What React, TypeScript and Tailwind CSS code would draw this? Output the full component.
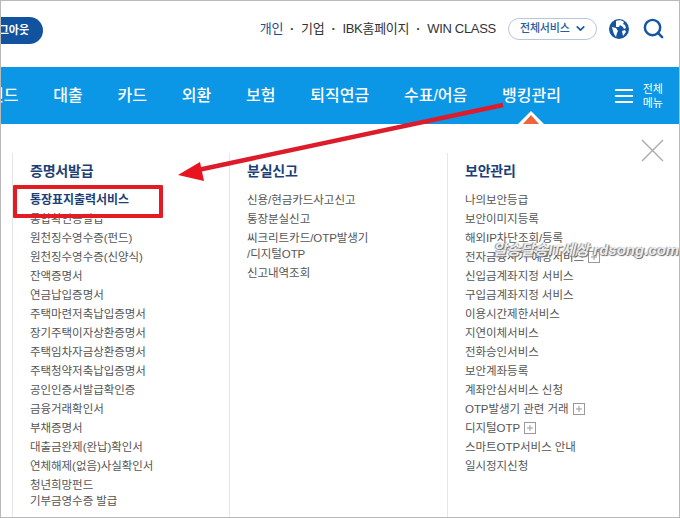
import { Search, ChevronDown } from 'lucide-react';

const FONT = "font-['Liberation_Sans','Noto_Sans_CJK_KR',sans-serif]";

const NAV = ['펀드', '대출', '카드', '외환', '보험', '퇴직연금', '수표/어음', '뱅킹관리'];

type Item = { label: string; sub?: string; plus?: boolean };

const COL1: Item[] = [
  { label: '통장표지출력서비스' },
  { label: '통합확인증발급' },
  { label: '원천징수영수증(펀드)' },
  { label: '원천징수영수증(신양식)' },
  { label: '잔액증명서' },
  { label: '연금납입증명서' },
  { label: '주택마련저축납입증명서' },
  { label: '장기주택이자상환증명서' },
  { label: '주택임차자금상환증명서' },
  { label: '주택청약저축납입증명서' },
  { label: '공인인증서발급확인증' },
  { label: '금융거래확인서' },
  { label: '부채증명서' },
  { label: '대출금완제(완납)확인서' },
  { label: '연체해제(없음)사실확인서' },
  { label: '청년희망펀드', sub: '기부금영수증 발급' },
];

const COL2: Item[] = [
  { label: '신용/현금카드사고신고' },
  { label: '통장분실신고' },
  { label: '씨크리트카드/OTP발생기', sub: '/디지털OTP' },
  { label: '신고내역조회' },
];

const COL3: Item[] = [
  { label: '나의보안등급' },
  { label: '보안이미지등록' },
  { label: '해외IP차단조회/등록' },
  { label: '전자금융사기 예방서비스', plus: true },
  { label: '신입금계좌지정 서비스' },
  { label: '구입금계좌지정 서비스' },
  { label: '이용시간제한서비스' },
  { label: '지연이체서비스' },
  { label: '전화승인서비스' },
  { label: '보안계좌등록' },
  { label: '계좌안심서비스 신청' },
  { label: 'OTP발생기 관련 거래', plus: true },
  { label: '디지털OTP', plus: true },
  { label: '스마트OTP서비스 안내' },
  { label: '일시정지신청' },
];

function PlusBox() {
  return (
    <svg width="12" height="12" viewBox="0 0 12 12" className="ml-[4px] shrink-0" fill="none" stroke="#999">
      <rect x="0.5" y="0.5" width="11" height="11" />
      <path d="M6 3v6M3 6h6" />
    </svg>
  );
}

function MenuColumn({ title, items, width, bold }: { title: string; items: Item[]; width: string; bold?: boolean }) {
  return (
    <div className={`${width} h-full shrink-0 border-l border-[#e6e6e6] pl-[17px] pt-[9px]`}>
      <h3 className="text-[14px] leading-[18px] font-bold text-[#1c3f77] tracking-[-0.2px]">{title}</h3>
      <ul className="mt-[10px]">
        {items.map((item, i) => (
          <li key={item.label} className="py-[1.5px] text-[11.5px] leading-[16px] text-[#555] tracking-[-0.05px]">
            <span className={`flex items-center ${bold && i === 0 ? 'text-[12px] font-bold text-[#1c3f77]' : ''}`}>
              {item.label}
              {item.plus && <PlusBox />}
            </span>
            {item.sub && <span className="block">{item.sub}</span>}
          </li>
        ))}
      </ul>
    </div>
  );
}

export default function App() {
  return (
    <div className={`relative h-[518px] w-[680px] overflow-hidden border border-[#b9b9b9] bg-white ${FONT}`}>
      {/* 상단 유틸 영역 */}
      <div className="flex h-[66px] items-start justify-between pt-[16px]">
        <div className="flex h-[27px] w-[42px] items-center justify-end overflow-hidden rounded-r-full bg-[#12539f] pr-[14px]">
          <span className="whitespace-nowrap text-[11px] font-bold text-white">로그아웃</span>
        </div>
        <div className="flex items-center pr-[14px]">
          <div className="flex items-center text-[13px] tracking-[-0.3px] text-[#333]">
            <span className="text-[#1a4d8f]">개인</span>
            <span className="mx-[7px] font-bold text-[#444]">·</span>
            <span>기업</span>
            <span className="mx-[7px] font-bold text-[#444]">·</span>
            <span>IBK홈페이지</span>
            <span className="mx-[7px] font-bold text-[#444]">·</span>
            <span>WIN CLASS</span>
          </div>
          <div className="ml-[12px] flex h-[22px] w-[89px] items-center justify-between rounded-full border border-[#b9c6d8] pl-[11px] pr-[9px] text-[11px] font-medium tracking-[-0.2px] text-[#2a5d9c]">
            전체서비스
            <ChevronDown size={13} strokeWidth={3} className="text-[#1f5597]" />
          </div>
          <svg width="20" height="20" viewBox="0 0 20 20" className="ml-[12px]">
            <circle cx="10" cy="10" r="10" fill="#15569f" />
            <path d="M7 2c3-1.200 6-.6 8 1l-1 2 2 1 1 3-2 1-1-2-3-2-1 2-3 0zM3 8l4 1 2 3-1 2-1 4-2-3-1-3z" fill="#fff" />
            <path d="M13 12l3-1 1 2-3 4z" fill="#fff" />
          </svg>
          <Search size={23} strokeWidth={2.6} className="ml-[13px] text-[#15569f]" />
        </div>
      </div>

      {/* 메인 내비게이션 */}
      <div className="relative flex h-[57px] items-center overflow-hidden bg-[#0b96e6] text-white">
        <div className="ml-[-12px] flex items-center gap-[34.8px] text-[16px] font-medium">
          {NAV.map((label) => (
            <span key={label} className="whitespace-nowrap">{label}</span>
          ))}
        </div>
        <div className="ml-auto flex items-center pr-[16px]">
          <div className="flex w-[18px] flex-col gap-[4px]">
            <span className="h-[2px] bg-white" />
            <span className="h-[2px] bg-white" />
            <span className="h-[2px] bg-white" />
          </div>
          <div className="ml-[10px] text-center text-[11px] leading-[14px]">
            전체
            <br />
            메뉴
          </div>
        </div>
        {/* 선택된 메뉴 표시 삼각형 */}
        <svg width="26" height="13" viewBox="0 0 26 13" className="absolute bottom-0 left-[517px]">
          <path d="M13 0L26 13H0z" fill="#fff" />
          <path d="M13 4l8 9H5z" fill="#f0643c" />
        </svg>
      </div>

      {/* 메뉴 패널 */}
      <div className="relative flex h-[393px] pl-[11px] pt-[29px] text-[#555]">
        <MenuColumn title="증명서발급" items={COL1} width="w-[217px]" bold />
        <MenuColumn title="분실신고" items={COL2} width="w-[218px]" />
        <MenuColumn title="보안관리" items={COL3} width="w-[220px]" />
        <svg width="23" height="23" viewBox="0 0 23 23" className="absolute right-[15px] top-[15px]" stroke="#aaa" strokeWidth="1.4">
          <path d="M1 1l21 21M22 1L1 22" />
        </svg>
      </div>

      {/* 캡처 위에 그린 표시: 빨간 박스 + 화살표 */}
      <div className="absolute left-[12px] top-[184px] h-[33px] w-[150px] rounded-[1px] border-[4px] border-[#e31b23]" />
      <svg width="680" height="518" viewBox="0 0 680 518" className="pointer-events-none absolute -left-px -top-px">
        <path d="M503 105L198 170" stroke="#dd1c2b" strokeWidth="4.500" />
        <path d="M178 175L200 162L204 181z" fill="#e8141f" />
      </svg>

      {/* 워터마크 */}
      <div className="absolute left-[492px] top-[238px] whitespace-nowrap text-[15px] font-bold italic text-[#eeeeee] [text-shadow:1px_1px_1px_#666,-1px_0_1px_#888]">
        알송달송IT세상 rdsong.com
      </div>
    </div>
  );
}
